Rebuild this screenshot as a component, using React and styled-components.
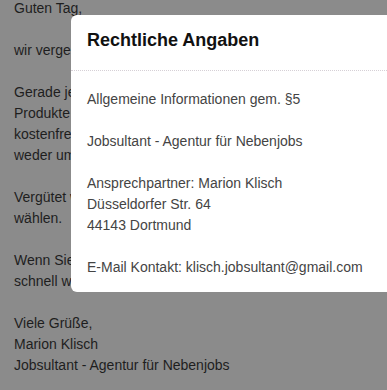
import React from "react";
import styled, { createGlobalStyle } from "styled-components";

const GlobalStyle = createGlobalStyle`
	html, body {
		margin: 0;
		padding: 0;
		overflow: hidden;
		background: #8b8b8b;
		font-family: "Liberation Sans", Arial, sans-serif;
	}
`;

const letter = [
	["Guten Tag,"],
	["wir vergeben derzeit bezahlte Produkttests."],
	[
		"Gerade jetzt suchen wir wieder Tester, die",
		"Produkte ausprobieren und bewerten. Die",
		"kostenfreie Teilnahme ist unverbindlich, es",
		"weder umständliche Wege noch Kosten.",
	],
	["Vergütet wird jeder Test, die Produkte dürfen Sie", "wählen."],
	["Wenn Sie Interesse haben, melden Sie sich bitte", "schnell weil die Plätze begrenzt sind."],
	["Viele Grüße,", "Marion Klisch", "Jobsultant - Agentur für Nebenjobs"],
];

function App() {
	return (
		<>
			<GlobalStyle />
			<Page>
				{letter.map((para, i) => (
					<Paragraph key={i}>
						{para.map((line, j) => (
							<Line key={j}>{line}</Line>
						))}
					</Paragraph>
				))}
			</Page>
			<Modal>
				<ModalHeader>
					<ModalTitle>Rechtliche Angaben</ModalTitle>
				</ModalHeader>
				<ModalBody>
					<Paragraph>
						<Line>Allgemeine Informationen gem. §5</Line>
					</Paragraph>
					<Paragraph>
						<Line>Jobsultant - Agentur für Nebenjobs</Line>
					</Paragraph>
					<Paragraph>
						<Line>Ansprechpartner: Marion Klisch</Line>
						<Line>Düsseldorfer Str. 64</Line>
						<Line>44143 Dortmund</Line>
					</Paragraph>
					<Paragraph>
						<Line>E-Mail Kontakt: klisch.jobsultant@gmail.com</Line>
					</Paragraph>
				</ModalBody>
			</Modal>
		</>
	);
}

export default App;

const Page = styled.div`
	height: 390px;
	padding: 0 14px;
	color: #1e1e1e;
	font-size: 14px;
	line-height: 21px;
	display: flex;
	flex-direction: column;
	gap: 21px;
	margin-top: -2px;
`;

const Paragraph = styled.div`
	display: flex;
	flex-direction: column;
`;

const Line = styled.div`
	white-space: nowrap;
`;

const Modal = styled.div`
	position: absolute;
	top: 15px;
	left: 71px;
	right: 0;
	background: #fff;
	border-radius: 6px 0 0 6px;
`;

const ModalHeader = styled.div`
	padding: 15px 16px 19px;
	border-bottom: 1px dotted #d6d0d6;
`;

const ModalTitle = styled.h4`
	margin: 0;
	font-size: 18px;
	font-weight: 700;
	line-height: 21px;
	color: #111;
`;

const ModalBody = styled.div`
	padding: 18px 16px 14px;
	color: #444;
	font-size: 14px;
	line-height: 21px;
	display: flex;
	flex-direction: column;
	gap: 21px;
`;
